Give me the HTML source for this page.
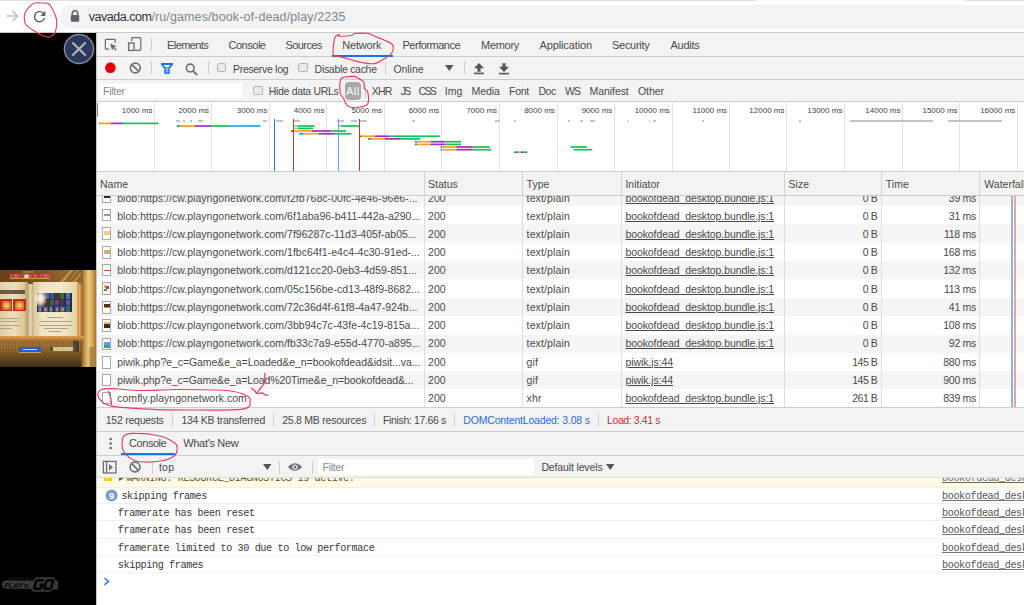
<!DOCTYPE html>
<html><head><meta charset="utf-8"><style>
html,body{margin:0;padding:0;}
body{width:1024px;height:605px;overflow:hidden;position:relative;background:#fff;font-family:"Liberation Sans",sans-serif;}
.t{position:absolute;white-space:nowrap;}
svg{overflow:visible}
</style></head><body>
<div style="position:absolute;left:0.00px;top:0.00px;width:1024.00px;height:33.00px;background:#fff"></div>
<div style="position:absolute;left:0.00px;top:0.00px;width:757.00px;height:1.00px;background:#dee1e6"></div>
<div style="position:absolute;left:964.00px;top:0.00px;width:60.00px;height:1.00px;background:#dee1e6"></div>
<div style="position:absolute;left:60.00px;top:4.50px;width:980.00px;height:24.50px;background:#f1f3f4;border-radius:12px"></div>
<div style="position:absolute;left:0.00px;top:32.00px;width:1024.00px;height:1.00px;background:#c9c9c9"></div>
<svg style="position:absolute;left:4px;top:8px;" width="16" height="16" viewBox="0 0 16 16"><path d="M2.5 8 H13.5 M8.5 3 L13.5 8 L8.5 13" fill="none" stroke="#bdc1c6" stroke-width="1.6"/></svg>
<svg style="position:absolute;left:31.15px;top:7.85px;" width="17.3" height="17.3" viewBox="0 0 17.3 17.3"><g transform="scale(0.7208)"><path d="M17.65 6.35A7.958 7.958 0 0 0 12 4c-4.42 0-7.99 3.58-7.99 8s3.57 8 7.99 8c3.73 0 6.84-2.55 7.73-6h-2.08A5.990 5.990 0 0 1 12 18c-3.31 0-6-2.690-6-6s2.690-6 6-6c1.66 0 3.14.69 4.220 1.78L13 11h7V4l-2.35 2.35z" fill="#5f6368"/></g></svg>
<svg style="position:absolute;left:69px;top:9px;" width="12" height="14" viewBox="0 0 12 14"><path d="M3.2 6 V4.6 A2.8 2.8 0 0 1 8.8 4.6 V6" fill="none" stroke="#5f6368" stroke-width="1.4"/><rect x="1.8" y="6" width="8.4" height="6.8" rx="0.8" fill="#5f6368"/></svg>
<div class="t" style="left:88.7px;top:10.72px;font-size:12.5px;line-height:12.5px;color:#303134"><span style="letter-spacing:-0.469px">vavada.com</span><span style="color:#80868b;letter-spacing:0.116px">/ru/games/book-of-dead/play/2235</span></div>
<div style="position:absolute;left:0.00px;top:33.00px;width:96.00px;height:572.00px;background:#000"></div>
<div style="position:absolute;left:96.00px;top:33.00px;width:928.00px;height:572.00px;background:#fff"></div>
<div style="position:absolute;left:96.00px;top:33.00px;width:1.00px;height:572.00px;background:#c8c8c8"></div>
<div style="position:absolute;left:97.00px;top:33.00px;width:927.00px;height:23.00px;background:#f3f3f3"></div>
<div style="position:absolute;left:97.00px;top:56.00px;width:927.00px;height:1.00px;background:#cdcdcd"></div>
<svg style="position:absolute;left:104px;top:38px;" width="14" height="14" viewBox="0 0 14 14"><path d="M5.2 11.2 H2.2 Q1.4 11.2 1.4 10.4 V2.2 Q1.4 1.4 2.2 1.4 H10.4 Q11.2 1.4 11.2 2.2 V5" fill="none" stroke="#6e6e6e" stroke-width="1.2"/><path d="M6 5.6 L12.6 8.2 L10.2 9.2 L12.8 11.8 L11.8 12.8 L9.2 10.2 L8.2 12.6 Z" fill="#6e6e6e"/></svg>
<svg style="position:absolute;left:127px;top:36px;" width="16" height="16" viewBox="0 0 16 16"><path d="M4.6 5 V2.4 Q4.6 1.6 5.4 1.6 H13 Q13.8 1.6 13.8 2.4 V13.6 Q13.8 14.4 13 14.4 H7.6" fill="none" stroke="#6e6e6e" stroke-width="1.2"/><rect x="1.6" y="7" width="5.4" height="7.4" fill="none" stroke="#6e6e6e" stroke-width="1.4"/></svg>
<div style="position:absolute;left:151.00px;top:38.00px;width:1.00px;height:13.00px;background:#cfcfcf"></div>
<div class="t" style="left:167.10px;top:39.59px;font-size:11px;line-height:11px;color:#4a4a4a;letter-spacing:-0.606px;font-family:"Liberation Sans", sans-serif;">Elements</div>
<div class="t" style="left:228.50px;top:39.59px;font-size:11px;line-height:11px;color:#4a4a4a;letter-spacing:-0.479px;font-family:"Liberation Sans", sans-serif;">Console</div>
<div class="t" style="left:285.60px;top:39.59px;font-size:11px;line-height:11px;color:#4a4a4a;letter-spacing:-0.607px;font-family:"Liberation Sans", sans-serif;">Sources</div>
<div class="t" style="left:342.20px;top:39.59px;font-size:11px;line-height:11px;color:#4a4a4a;letter-spacing:-0.177px;font-family:"Liberation Sans", sans-serif;">Network</div>
<div class="t" style="left:402.50px;top:39.59px;font-size:11px;line-height:11px;color:#4a4a4a;letter-spacing:-0.497px;font-family:"Liberation Sans", sans-serif;">Performance</div>
<div class="t" style="left:481.00px;top:39.59px;font-size:11px;line-height:11px;color:#4a4a4a;letter-spacing:-0.287px;font-family:"Liberation Sans", sans-serif;">Memory</div>
<div class="t" style="left:539.50px;top:39.59px;font-size:11px;line-height:11px;color:#4a4a4a;letter-spacing:-0.119px;font-family:"Liberation Sans", sans-serif;">Application</div>
<div class="t" style="left:612.00px;top:39.59px;font-size:11px;line-height:11px;color:#4a4a4a;letter-spacing:-0.279px;font-family:"Liberation Sans", sans-serif;">Security</div>
<div class="t" style="left:670.50px;top:39.59px;font-size:11px;line-height:11px;color:#4a4a4a;letter-spacing:-0.262px;font-family:"Liberation Sans", sans-serif;">Audits</div>
<div style="position:absolute;left:332.00px;top:54.50px;width:60.50px;height:2.00px;background:#1a73e8"></div>
<div style="position:absolute;left:97.00px;top:57.00px;width:927.00px;height:22.00px;background:#f3f3f3"></div>
<div style="position:absolute;left:97.00px;top:79.00px;width:927.00px;height:1.00px;background:#cdcdcd"></div>
<svg style="position:absolute;left:103px;top:61px;" width="15" height="15" viewBox="0 0 15 15"><circle cx="7.4" cy="6.8" r="6" fill="#ff6b6b" opacity="0.35"/><circle cx="7.4" cy="6.8" r="5.2" fill="#e00000"/></svg>
<svg style="position:absolute;left:128px;top:61px;" width="15" height="15" viewBox="0 0 15 15"><circle cx="7.3" cy="7" r="4.9" fill="none" stroke="#6e6e6e" stroke-width="1.6"/><path d="M3.9 3.6 L10.7 10.4" stroke="#6e6e6e" stroke-width="1.6"/></svg>
<div style="position:absolute;left:150.50px;top:61.00px;width:1.00px;height:13.00px;background:#cfcfcf"></div>
<svg style="position:absolute;left:160px;top:62px;" width="14" height="13" viewBox="0 0 14 13"><path d="M1 1 H13 V2.8 L9.8 6.6 V10.4 Q9.8 11.9 8.3 11.9 H5.7 Q4.2 11.9 4.2 10.4 V6.6 L1 2.8 Z" fill="#1a73e8"/><path d="M3.4 2.9 H10.6 L8.5 5.3 H5.5 Z" fill="#f3f3f3"/><path d="M5.6 5.6 H8.4 V9.9 Q8.4 10.5 7.8 10.5 H6.2 Q5.6 10.5 5.6 9.9 Z" fill="#8dbaf6"/></svg>
<svg style="position:absolute;left:184.5px;top:62.5px;" width="14" height="13" viewBox="0 0 14 13"><circle cx="5.2" cy="5" r="3.9" fill="none" stroke="#6e6e6e" stroke-width="1.6"/><path d="M8 7.8 L12.2 12" stroke="#6e6e6e" stroke-width="1.9"/></svg>
<div style="position:absolute;left:207.50px;top:61.00px;width:1.00px;height:13.00px;background:#cfcfcf"></div>
<div style="position:absolute;left:217.00px;top:63.00px;width:9.00px;height:9.30px;background:#eaeaea;border:1px solid #b5b5b5;border-radius:2px;box-sizing:border-box"></div>
<div class="t" style="left:233.00px;top:63.71px;font-size:10.5px;line-height:10.5px;color:#4a4a4a;letter-spacing:-0.312px;font-family:"Liberation Sans", sans-serif;">Preserve log</div>
<div style="position:absolute;left:298.30px;top:63.00px;width:9.30px;height:9.30px;background:#eaeaea;border:1px solid #b5b5b5;border-radius:2px;box-sizing:border-box"></div>
<div class="t" style="left:314.60px;top:63.71px;font-size:10.5px;line-height:10.5px;color:#4a4a4a;letter-spacing:-0.296px;font-family:"Liberation Sans", sans-serif;">Disable cache</div>
<div style="position:absolute;left:384.50px;top:61.00px;width:1.00px;height:13.00px;background:#cfcfcf"></div>
<div class="t" style="left:393.40px;top:63.71px;font-size:10.5px;line-height:10.5px;color:#4a4a4a;letter-spacing:-0.042px;font-family:"Liberation Sans", sans-serif;">Online</div>
<svg style="position:absolute;left:444px;top:64px;" width="11" height="8" viewBox="0 0 11 8"><path d="M1 1 H9.5 L5.25 7 Z" fill="#555"/></svg>
<div style="position:absolute;left:463.50px;top:61.00px;width:1.00px;height:13.00px;background:#cfcfcf"></div>
<svg style="position:absolute;left:472px;top:61px;" width="14" height="14" viewBox="0 0 14 14"><path d="M7 2 L12 7.2 H8.6 V10.8 H5.4 V7.2 H2 Z" fill="#555"/><rect x="2" y="11.6" width="10" height="1.6" fill="#555"/></svg>
<svg style="position:absolute;left:496.5px;top:61px;" width="14" height="14" viewBox="0 0 14 14"><path d="M7 11 L12 5.8 H8.6 V2.2 H5.4 V5.8 H2 Z" fill="#555"/><rect x="2" y="11.8" width="10" height="1.6" fill="#555"/></svg>
<div style="position:absolute;left:97.00px;top:80.00px;width:927.00px;height:21.00px;background:#f3f3f3"></div>
<div style="position:absolute;left:97.00px;top:101.00px;width:927.00px;height:1.00px;background:#cdcdcd"></div>
<div style="position:absolute;left:100.00px;top:82.70px;width:142.00px;height:15.50px;background:#fff"></div>
<div class="t" style="left:103.00px;top:86.31px;font-size:10.5px;line-height:10.5px;color:#8a8a8a;letter-spacing:-0.272px;font-family:"Liberation Sans", sans-serif;">Filter</div>
<div style="position:absolute;left:253.20px;top:86.00px;width:9.40px;height:9.40px;background:#eaeaea;border:1px solid #b5b5b5;border-radius:2px;box-sizing:border-box"></div>
<div class="t" style="left:268.70px;top:86.11px;font-size:10.5px;line-height:10.5px;color:#4a4a4a;letter-spacing:-0.308px;font-family:"Liberation Sans", sans-serif;">Hide data URLs</div>
<div style="position:absolute;left:345.00px;top:82.20px;width:16.00px;height:18.00px;background:#a9a9a9;border-radius:4px"></div>
<div class="t" style="left:346.20px;top:86.11px;font-size:10.5px;line-height:10.5px;color:#fff;letter-spacing:0.610px;font-family:"Liberation Sans", sans-serif;">All</div>
<div style="position:absolute;left:364.50px;top:85.00px;width:1.00px;height:13.00px;background:#cfcfcf"></div>
<div class="t" style="left:371.80px;top:86.11px;font-size:10.5px;line-height:10.5px;color:#4a4a4a;letter-spacing:-0.823px;font-family:"Liberation Sans", sans-serif;">XHR</div>
<div class="t" style="left:400.80px;top:86.11px;font-size:10.5px;line-height:10.5px;color:#4a4a4a;letter-spacing:-1.827px;font-family:"Liberation Sans", sans-serif;">JS</div>
<div class="t" style="left:418.60px;top:86.11px;font-size:10.5px;line-height:10.5px;color:#4a4a4a;letter-spacing:-1.664px;font-family:"Liberation Sans", sans-serif;">CSS</div>
<div class="t" style="left:444.70px;top:86.11px;font-size:10.5px;line-height:10.5px;color:#4a4a4a;letter-spacing:0.033px;font-family:"Liberation Sans", sans-serif;">Img</div>
<div class="t" style="left:471.60px;top:86.11px;font-size:10.5px;line-height:10.5px;color:#4a4a4a;letter-spacing:-0.079px;font-family:"Liberation Sans", sans-serif;">Media</div>
<div class="t" style="left:509.10px;top:86.11px;font-size:10.5px;line-height:10.5px;color:#4a4a4a;letter-spacing:-0.277px;font-family:"Liberation Sans", sans-serif;">Font</div>
<div class="t" style="left:538.40px;top:86.11px;font-size:10.5px;line-height:10.5px;color:#4a4a4a;letter-spacing:-0.357px;font-family:"Liberation Sans", sans-serif;">Doc</div>
<div class="t" style="left:564.90px;top:86.11px;font-size:10.5px;line-height:10.5px;color:#4a4a4a;letter-spacing:-0.857px;font-family:"Liberation Sans", sans-serif;">WS</div>
<div class="t" style="left:589.50px;top:86.11px;font-size:10.5px;line-height:10.5px;color:#4a4a4a;letter-spacing:-0.060px;font-family:"Liberation Sans", sans-serif;">Manifest</div>
<div class="t" style="left:638.00px;top:86.11px;font-size:10.5px;line-height:10.5px;color:#4a4a4a;letter-spacing:-0.092px;font-family:"Liberation Sans", sans-serif;">Other</div>
<div style="position:absolute;left:154.25px;top:102.00px;width:1.00px;height:69.00px;background:#e3e3e3"></div>
<div class="t" style="right:871.55px;top:107.43px;font-size:8px;line-height:8px;color:#444;font-family:"Liberation Sans", sans-serif;">1000 ms</div>
<div style="position:absolute;left:210.90px;top:102.00px;width:1.00px;height:69.00px;background:#e3e3e3"></div>
<div class="t" style="right:814.90px;top:107.43px;font-size:8px;line-height:8px;color:#444;font-family:"Liberation Sans", sans-serif;">2000 ms</div>
<div style="position:absolute;left:269.30px;top:102.00px;width:1.00px;height:69.00px;background:#e3e3e3"></div>
<div class="t" style="right:756.50px;top:107.43px;font-size:8px;line-height:8px;color:#444;font-family:"Liberation Sans", sans-serif;">3000 ms</div>
<div style="position:absolute;left:326.20px;top:102.00px;width:1.00px;height:69.00px;background:#e3e3e3"></div>
<div class="t" style="right:699.60px;top:107.43px;font-size:8px;line-height:8px;color:#444;font-family:"Liberation Sans", sans-serif;">4000 ms</div>
<div style="position:absolute;left:383.90px;top:102.00px;width:1.00px;height:69.00px;background:#e3e3e3"></div>
<div class="t" style="right:641.90px;top:107.43px;font-size:8px;line-height:8px;color:#444;font-family:"Liberation Sans", sans-serif;">5000 ms</div>
<div style="position:absolute;left:441.10px;top:102.00px;width:1.00px;height:69.00px;background:#e3e3e3"></div>
<div class="t" style="right:584.70px;top:107.43px;font-size:8px;line-height:8px;color:#444;font-family:"Liberation Sans", sans-serif;">6000 ms</div>
<div style="position:absolute;left:498.90px;top:102.00px;width:1.00px;height:69.00px;background:#e3e3e3"></div>
<div class="t" style="right:526.90px;top:107.43px;font-size:8px;line-height:8px;color:#444;font-family:"Liberation Sans", sans-serif;">7000 ms</div>
<div style="position:absolute;left:556.60px;top:102.00px;width:1.00px;height:69.00px;background:#e3e3e3"></div>
<div class="t" style="right:469.20px;top:107.43px;font-size:8px;line-height:8px;color:#444;font-family:"Liberation Sans", sans-serif;">8000 ms</div>
<div style="position:absolute;left:614.10px;top:102.00px;width:1.00px;height:69.00px;background:#e3e3e3"></div>
<div class="t" style="right:411.70px;top:107.43px;font-size:8px;line-height:8px;color:#444;font-family:"Liberation Sans", sans-serif;">9000 ms</div>
<div style="position:absolute;left:671.60px;top:102.00px;width:1.00px;height:69.00px;background:#e3e3e3"></div>
<div class="t" style="right:354.20px;top:107.43px;font-size:8px;line-height:8px;color:#444;font-family:"Liberation Sans", sans-serif;">10000 ms</div>
<div style="position:absolute;left:728.90px;top:102.00px;width:1.00px;height:69.00px;background:#e3e3e3"></div>
<div class="t" style="right:296.90px;top:107.43px;font-size:8px;line-height:8px;color:#444;font-family:"Liberation Sans", sans-serif;">11000 ms</div>
<div style="position:absolute;left:786.30px;top:102.00px;width:1.00px;height:69.00px;background:#e3e3e3"></div>
<div class="t" style="right:239.50px;top:107.43px;font-size:8px;line-height:8px;color:#444;font-family:"Liberation Sans", sans-serif;">12000 ms</div>
<div style="position:absolute;left:844.20px;top:102.00px;width:1.00px;height:69.00px;background:#e3e3e3"></div>
<div class="t" style="right:181.60px;top:107.43px;font-size:8px;line-height:8px;color:#444;font-family:"Liberation Sans", sans-serif;">13000 ms</div>
<div style="position:absolute;left:902.30px;top:102.00px;width:1.00px;height:69.00px;background:#e3e3e3"></div>
<div class="t" style="right:123.50px;top:107.43px;font-size:8px;line-height:8px;color:#444;font-family:"Liberation Sans", sans-serif;">14000 ms</div>
<div style="position:absolute;left:959.40px;top:102.00px;width:1.00px;height:69.00px;background:#e3e3e3"></div>
<div class="t" style="right:66.40px;top:107.43px;font-size:8px;line-height:8px;color:#444;font-family:"Liberation Sans", sans-serif;">15000 ms</div>
<div style="position:absolute;left:1017.10px;top:102.00px;width:1.00px;height:69.00px;background:#e3e3e3"></div>
<div class="t" style="right:8.70px;top:107.43px;font-size:8px;line-height:8px;color:#444;font-family:"Liberation Sans", sans-serif;">16000 ms</div>
<div style="position:absolute;left:97.00px;top:102.50px;width:1.20px;height:14.00px;background:#8a8a8a"></div>
<div style="position:absolute;left:176.30px;top:120.40px;width:3.70px;height:1.20px;background:#c4c4c4"></div>
<div style="position:absolute;left:182.50px;top:120.40px;width:2.50px;height:1.20px;background:#c4c4c4"></div>
<div style="position:absolute;left:190.00px;top:120.40px;width:2.00px;height:1.20px;background:#c4c4c4"></div>
<div style="position:absolute;left:198.00px;top:120.40px;width:5.00px;height:1.20px;background:#c4c4c4"></div>
<div style="position:absolute;left:262.70px;top:120.40px;width:4.30px;height:1.20px;background:#c4c4c4"></div>
<div style="position:absolute;left:275.60px;top:120.40px;width:7.80px;height:1.20px;background:#c4c4c4"></div>
<div style="position:absolute;left:293.60px;top:120.40px;width:6.20px;height:1.20px;background:#c4c4c4"></div>
<div style="position:absolute;left:336.60px;top:120.40px;width:7.80px;height:1.20px;background:#c4c4c4"></div>
<div style="position:absolute;left:351.40px;top:120.40px;width:5.50px;height:1.20px;background:#c4c4c4"></div>
<div style="position:absolute;left:360.00px;top:120.40px;width:7.00px;height:1.20px;background:#c4c4c4"></div>
<div style="position:absolute;left:412.00px;top:120.40px;width:2.70px;height:1.20px;background:#c4c4c4"></div>
<div style="position:absolute;left:495.00px;top:120.40px;width:5.00px;height:1.20px;background:#c4c4c4"></div>
<div style="position:absolute;left:514.00px;top:120.40px;width:1.60px;height:1.20px;background:#c4c4c4"></div>
<div style="position:absolute;left:568.00px;top:120.40px;width:1.70px;height:1.20px;background:#c4c4c4"></div>
<div style="position:absolute;left:579.80px;top:120.40px;width:3.20px;height:1.20px;background:#c4c4c4"></div>
<div style="position:absolute;left:590.00px;top:120.40px;width:4.70px;height:1.20px;background:#c4c4c4"></div>
<div style="position:absolute;left:627.50px;top:120.40px;width:1.50px;height:1.20px;background:#c4c4c4"></div>
<div style="position:absolute;left:648.60px;top:120.40px;width:1.40px;height:1.20px;background:#c4c4c4"></div>
<div style="position:absolute;left:653.30px;top:120.40px;width:2.30px;height:1.20px;background:#c4c4c4"></div>
<div style="position:absolute;left:850.30px;top:120.40px;width:83.10px;height:1.20px;background:#c4c4c4"></div>
<div style="position:absolute;left:947.70px;top:120.40px;width:54.00px;height:1.20px;background:#c4c4c4"></div>
<div style="position:absolute;left:702.00px;top:120.40px;width:1.50px;height:1.20px;background:#c4c4c4"></div>
<div style="position:absolute;left:799.00px;top:120.40px;width:2.00px;height:1.20px;background:#c4c4c4"></div>
<svg style="position:absolute;left:0;top:0" width="1024" height="180" viewBox="0 0 1024 180"><rect x="98.90" y="122.55" width="1.50" height="1.7" fill="#159e96"/><rect x="100.40" y="122.55" width="10.60" height="1.7" fill="#ff9e1b"/><rect x="111.00" y="122.55" width="12.00" height="1.7" fill="#9b30c4"/><rect x="123.00" y="122.55" width="35.60" height="1.7" fill="#15c05a"/><rect x="176.80" y="125.15" width="3.20" height="1.7" fill="#159e96"/><rect x="180.00" y="125.15" width="15.00" height="1.7" fill="#ff9e1b"/><rect x="195.00" y="125.15" width="16.00" height="1.7" fill="#9b30c4"/><rect x="211.00" y="125.15" width="17.00" height="1.7" fill="#15c05a"/><rect x="228.00" y="125.15" width="32.60" height="1.7" fill="#2aa6ee"/><rect x="294.40" y="125.15" width="3.10" height="1.7" fill="#b9b9b9"/><rect x="297.50" y="125.15" width="17.20" height="1.7" fill="#15c05a"/><rect x="294.40" y="127.55" width="3.10" height="1.7" fill="#b9b9b9"/><rect x="297.50" y="127.55" width="15.50" height="1.7" fill="#15c05a"/><rect x="291.00" y="130.15" width="2.60" height="1.7" fill="#555"/><rect x="293.60" y="130.15" width="18.00" height="1.7" fill="#ff9e1b"/><rect x="311.60" y="130.15" width="19.40" height="1.7" fill="#9b30c4"/><rect x="331.00" y="130.15" width="15.00" height="1.7" fill="#15c05a"/><rect x="299.00" y="132.90" width="4.75" height="1.7" fill="#159e96"/><rect x="303.75" y="132.90" width="14.85" height="1.7" fill="#ff9e1b"/><rect x="318.60" y="132.90" width="16.40" height="1.7" fill="#9b30c4"/><rect x="335.00" y="132.90" width="16.40" height="1.7" fill="#15c05a"/><rect x="339.00" y="125.15" width="2.00" height="1.7" fill="#b9b9b9"/><rect x="341.00" y="125.15" width="18.00" height="1.7" fill="#15c05a"/><rect x="359.80" y="135.40" width="1.70" height="1.7" fill="#555"/><rect x="361.50" y="135.40" width="13.30" height="1.7" fill="#ff9e1b"/><rect x="374.80" y="135.40" width="14.90" height="1.7" fill="#9b30c4"/><rect x="389.70" y="135.40" width="50.10" height="1.7" fill="#15c05a"/><rect x="367.80" y="138.05" width="3.20" height="1.7" fill="#159e96"/><rect x="371.00" y="138.05" width="14.00" height="1.7" fill="#ff9e1b"/><rect x="385.00" y="138.05" width="15.60" height="1.7" fill="#9b30c4"/><rect x="400.60" y="138.05" width="19.70" height="1.7" fill="#15c05a"/><rect x="414.80" y="140.85" width="2.40" height="1.7" fill="#159e96"/><rect x="417.20" y="140.85" width="13.30" height="1.7" fill="#ff9e1b"/><rect x="430.50" y="140.85" width="14.80" height="1.7" fill="#9b30c4"/><rect x="445.30" y="140.85" width="15.70" height="1.7" fill="#15c05a"/><rect x="414.80" y="143.55" width="2.40" height="1.7" fill="#159e96"/><rect x="417.20" y="143.55" width="13.30" height="1.7" fill="#ff9e1b"/><rect x="430.50" y="143.55" width="14.80" height="1.7" fill="#9b30c4"/><rect x="445.30" y="143.55" width="15.70" height="1.7" fill="#15c05a"/><rect x="440.60" y="146.15" width="1.60" height="1.7" fill="#159e96"/><rect x="442.20" y="146.15" width="14.05" height="1.7" fill="#ff9e1b"/><rect x="456.25" y="146.15" width="16.45" height="1.7" fill="#9b30c4"/><rect x="472.70" y="146.15" width="17.10" height="1.7" fill="#15c05a"/><rect x="440.60" y="148.85" width="1.60" height="1.7" fill="#159e96"/><rect x="442.20" y="148.85" width="14.05" height="1.7" fill="#ff9e1b"/><rect x="456.25" y="148.85" width="16.45" height="1.7" fill="#9b30c4"/><rect x="472.70" y="148.85" width="18.70" height="1.7" fill="#15c05a"/><rect x="514.00" y="151.35" width="4.75" height="1.7" fill="#159e96"/><rect x="518.75" y="151.35" width="2.25" height="1.7" fill="#ff9e1b"/><rect x="521.00" y="151.35" width="2.40" height="1.7" fill="#9b30c4"/><rect x="523.40" y="151.35" width="3.90" height="1.7" fill="#159e96"/><rect x="570.50" y="146.15" width="16.40" height="1.7" fill="#15c05a"/><rect x="573.60" y="148.85" width="18.70" height="1.7" fill="#15c05a"/></svg>
<div style="position:absolute;left:274.00px;top:119.00px;width:1.20px;height:52.00px;background:#2f6fd6"></div>
<div style="position:absolute;left:293.00px;top:119.00px;width:1.20px;height:52.00px;background:#cc3333"></div>
<div style="position:absolute;left:338.00px;top:119.00px;width:1.20px;height:52.00px;background:#6a9de6"></div>
<div style="position:absolute;left:359.00px;top:119.00px;width:1.20px;height:52.00px;background:#cc3333"></div>
<div style="position:absolute;left:97.00px;top:171.00px;width:927.00px;height:1.00px;background:#cdcdcd"></div>
<div style="position:absolute;left:97.00px;top:172.00px;width:927.00px;height:23.00px;background:#f3f3f3"></div>
<div style="position:absolute;left:97.00px;top:195.00px;width:927.00px;height:1.00px;background:#cdcdcd"></div>
<div style="position:absolute;left:423.60px;top:172.00px;width:1.00px;height:23.00px;background:#d4d4d4"></div>
<div style="position:absolute;left:522.10px;top:172.00px;width:1.00px;height:23.00px;background:#d4d4d4"></div>
<div style="position:absolute;left:621.00px;top:172.00px;width:1.00px;height:23.00px;background:#d4d4d4"></div>
<div style="position:absolute;left:784.10px;top:172.00px;width:1.00px;height:23.00px;background:#d4d4d4"></div>
<div style="position:absolute;left:880.90px;top:172.00px;width:1.00px;height:23.00px;background:#d4d4d4"></div>
<div style="position:absolute;left:979.30px;top:172.00px;width:1.00px;height:23.00px;background:#d4d4d4"></div>
<div class="t" style="left:100.00px;top:179.21px;font-size:10.5px;line-height:10.5px;color:#4a4a4a;font-family:"Liberation Sans", sans-serif;">Name</div>
<div class="t" style="left:428.10px;top:179.21px;font-size:10.5px;line-height:10.5px;color:#4a4a4a;font-family:"Liberation Sans", sans-serif;">Status</div>
<div class="t" style="left:526.60px;top:179.21px;font-size:10.5px;line-height:10.5px;color:#4a4a4a;font-family:"Liberation Sans", sans-serif;">Type</div>
<div class="t" style="left:625.40px;top:179.21px;font-size:10.5px;line-height:10.5px;color:#4a4a4a;font-family:"Liberation Sans", sans-serif;">Initiator</div>
<div class="t" style="left:788.60px;top:179.21px;font-size:10.5px;line-height:10.5px;color:#4a4a4a;font-family:"Liberation Sans", sans-serif;">Size</div>
<div class="t" style="left:885.80px;top:179.21px;font-size:10.5px;line-height:10.5px;color:#4a4a4a;font-family:"Liberation Sans", sans-serif;">Time</div>
<div class="t" style="left:984.30px;top:179.21px;font-size:10.5px;line-height:10.5px;color:#4a4a4a;font-family:"Liberation Sans", sans-serif;">Waterfall</div>
<div style="position:absolute;left:97px;top:196px;width:927px;height:211px;overflow:hidden">
<div style="position:absolute;left:0;top:-8.60px;width:927px;height:18.35px;background:#f5f5f5"></div>
<div style="position:absolute;left:0;top:9.75px;width:927px;height:18.45px;background:#fff"></div>
<div style="position:absolute;left:0;top:28.20px;width:927px;height:18.80px;background:#f5f5f5"></div>
<div style="position:absolute;left:0;top:47.00px;width:927px;height:17.80px;background:#fff"></div>
<div style="position:absolute;left:0;top:64.80px;width:927px;height:18.60px;background:#f5f5f5"></div>
<div style="position:absolute;left:0;top:83.40px;width:927px;height:18.70px;background:#fff"></div>
<div style="position:absolute;left:0;top:102.10px;width:927px;height:18.30px;background:#f5f5f5"></div>
<div style="position:absolute;left:0;top:120.40px;width:927px;height:18.20px;background:#fff"></div>
<div style="position:absolute;left:0;top:138.60px;width:927px;height:18.40px;background:#f5f5f5"></div>
<div style="position:absolute;left:0;top:157.00px;width:927px;height:17.80px;background:#fff"></div>
<div style="position:absolute;left:0;top:174.80px;width:927px;height:18.10px;background:#f5f5f5"></div>
<div style="position:absolute;left:0;top:192.90px;width:927px;height:17.90px;background:#fff"></div>
<div style="position:absolute;left:326.60px;top:0;width:1px;height:300px;background:#dedede"></div>
<div style="position:absolute;left:425.10px;top:0;width:1px;height:300px;background:#dedede"></div>
<div style="position:absolute;left:524.00px;top:0;width:1px;height:300px;background:#dedede"></div>
<div style="position:absolute;left:687.10px;top:0;width:1px;height:300px;background:#dedede"></div>
<div style="position:absolute;left:783.90px;top:0;width:1px;height:300px;background:#dedede"></div>
<div style="position:absolute;left:882.30px;top:0;width:1px;height:300px;background:#dedede"></div>
<div class="t" style="left:20.20px;top:-3.48px;font-size:10.5px;line-height:10.5px;color:#4a4a4a;letter-spacing:0.034px;">blob:https://cw.playngonetwork.com/f2fb768c-00fc-4e46-96e6-...</div>
<div class="t" style="left:331.10px;top:-3.48px;font-size:10.5px;line-height:10.5px;color:#4a4a4a;">200</div>
<div class="t" style="left:429.60px;top:-3.48px;font-size:10.5px;line-height:10.5px;color:#4a4a4a;letter-spacing:0.128px;">text/plain</div>
<div class="t" style="left:528.40px;top:-3.48px;font-size:10.5px;line-height:10.5px;color:#4a4a4a;letter-spacing:-0.086px;text-decoration:underline">bookofdead_desktop.bundle.js:1</div>
<div class="t" style="left:auto;right:146.80px;top:-3.48px;font-size:10.5px;line-height:10.5px;color:#4a4a4a;letter-spacing:-0.473px;">0 B</div>
<div class="t" style="left:auto;right:48.00px;top:-3.48px;font-size:10.5px;line-height:10.5px;color:#4a4a4a;letter-spacing:-0.286px;">39 ms</div>
<div style="position:absolute;left:5.40px;top:-5.60px;width:9px;height:12.5px;background:#fff;border:1px solid #a8a8a8;box-sizing:border-box"></div>
<div style="position:absolute;left:6.90px;top:-0.10px;width:6px;height:2.5px;background:#2a2a2a"></div>
<div class="t" style="left:20.20px;top:14.76px;font-size:10.5px;line-height:10.5px;color:#4a4a4a;letter-spacing:0.035px;">blob:https://cw.playngonetwork.com/6f1aba96-b411-442a-a290...</div>
<div class="t" style="left:331.10px;top:14.76px;font-size:10.5px;line-height:10.5px;color:#4a4a4a;">200</div>
<div class="t" style="left:429.60px;top:14.76px;font-size:10.5px;line-height:10.5px;color:#4a4a4a;letter-spacing:0.128px;">text/plain</div>
<div class="t" style="left:528.40px;top:14.76px;font-size:10.5px;line-height:10.5px;color:#4a4a4a;letter-spacing:-0.086px;text-decoration:underline">bookofdead_desktop.bundle.js:1</div>
<div class="t" style="left:auto;right:146.80px;top:14.76px;font-size:10.5px;line-height:10.5px;color:#4a4a4a;letter-spacing:-0.473px;">0 B</div>
<div class="t" style="left:auto;right:48.00px;top:14.76px;font-size:10.5px;line-height:10.5px;color:#4a4a4a;letter-spacing:-0.286px;">31 ms</div>
<div style="position:absolute;left:5.40px;top:12.75px;width:9px;height:12.5px;background:#fff;border:1px solid #a8a8a8;box-sizing:border-box"></div>
<div style="position:absolute;left:6.90px;top:18.25px;width:6px;height:1.5px;background:#b0947a"></div>
<div class="t" style="left:20.20px;top:33.00px;font-size:10.5px;line-height:10.5px;color:#4a4a4a;letter-spacing:0.034px;">blob:https://cw.playngonetwork.com/7f96287c-11d3-405f-ab05...</div>
<div class="t" style="left:331.10px;top:33.00px;font-size:10.5px;line-height:10.5px;color:#4a4a4a;">200</div>
<div class="t" style="left:429.60px;top:33.00px;font-size:10.5px;line-height:10.5px;color:#4a4a4a;letter-spacing:0.128px;">text/plain</div>
<div class="t" style="left:528.40px;top:33.00px;font-size:10.5px;line-height:10.5px;color:#4a4a4a;letter-spacing:-0.086px;text-decoration:underline">bookofdead_desktop.bundle.js:1</div>
<div class="t" style="left:auto;right:146.80px;top:33.00px;font-size:10.5px;line-height:10.5px;color:#4a4a4a;letter-spacing:-0.473px;">0 B</div>
<div class="t" style="left:auto;right:48.00px;top:33.00px;font-size:10.5px;line-height:10.5px;color:#4a4a4a;letter-spacing:-0.280px;">118 ms</div>
<div style="position:absolute;left:5.40px;top:31.20px;width:9px;height:12.5px;background:#fff;border:1px solid #a8a8a8;box-sizing:border-box"></div>
<div style="position:absolute;left:6.90px;top:35.20px;width:6px;height:3.5px;background:#e8d080"></div>
<div class="t" style="left:20.20px;top:51.24px;font-size:10.5px;line-height:10.5px;color:#4a4a4a;letter-spacing:0.034px;">blob:https://cw.playngonetwork.com/1fbc64f1-e4c4-4c30-91ed-...</div>
<div class="t" style="left:331.10px;top:51.24px;font-size:10.5px;line-height:10.5px;color:#4a4a4a;">200</div>
<div class="t" style="left:429.60px;top:51.24px;font-size:10.5px;line-height:10.5px;color:#4a4a4a;letter-spacing:0.128px;">text/plain</div>
<div class="t" style="left:528.40px;top:51.24px;font-size:10.5px;line-height:10.5px;color:#4a4a4a;letter-spacing:-0.086px;text-decoration:underline">bookofdead_desktop.bundle.js:1</div>
<div class="t" style="left:auto;right:146.80px;top:51.24px;font-size:10.5px;line-height:10.5px;color:#4a4a4a;letter-spacing:-0.473px;">0 B</div>
<div class="t" style="left:auto;right:48.00px;top:51.24px;font-size:10.5px;line-height:10.5px;color:#4a4a4a;letter-spacing:-0.287px;">168 ms</div>
<div style="position:absolute;left:5.40px;top:50.00px;width:9px;height:12.5px;background:#fff;border:1px solid #a8a8a8;box-sizing:border-box"></div>
<div style="position:absolute;left:6.90px;top:54.00px;width:6px;height:3.5px;background:#c8b070"></div>
<div class="t" style="left:20.20px;top:69.48px;font-size:10.5px;line-height:10.5px;color:#4a4a4a;letter-spacing:0.035px;">blob:https://cw.playngonetwork.com/d121cc20-0eb3-4d59-851...</div>
<div class="t" style="left:331.10px;top:69.48px;font-size:10.5px;line-height:10.5px;color:#4a4a4a;">200</div>
<div class="t" style="left:429.60px;top:69.48px;font-size:10.5px;line-height:10.5px;color:#4a4a4a;letter-spacing:0.128px;">text/plain</div>
<div class="t" style="left:528.40px;top:69.48px;font-size:10.5px;line-height:10.5px;color:#4a4a4a;letter-spacing:-0.086px;text-decoration:underline">bookofdead_desktop.bundle.js:1</div>
<div class="t" style="left:auto;right:146.80px;top:69.48px;font-size:10.5px;line-height:10.5px;color:#4a4a4a;letter-spacing:-0.473px;">0 B</div>
<div class="t" style="left:auto;right:48.00px;top:69.48px;font-size:10.5px;line-height:10.5px;color:#4a4a4a;letter-spacing:-0.287px;">132 ms</div>
<div style="position:absolute;left:5.40px;top:67.80px;width:9px;height:12.5px;background:#fff;border:1px solid #a8a8a8;box-sizing:border-box"></div>
<div style="position:absolute;left:6.90px;top:73.80px;width:6px;height:1px;background:#b05030"></div>
<div class="t" style="left:20.20px;top:87.72px;font-size:10.5px;line-height:10.5px;color:#4a4a4a;letter-spacing:0.035px;">blob:https://cw.playngonetwork.com/05c156be-cd13-48f9-8682...</div>
<div class="t" style="left:331.10px;top:87.72px;font-size:10.5px;line-height:10.5px;color:#4a4a4a;">200</div>
<div class="t" style="left:429.60px;top:87.72px;font-size:10.5px;line-height:10.5px;color:#4a4a4a;letter-spacing:0.128px;">text/plain</div>
<div class="t" style="left:528.40px;top:87.72px;font-size:10.5px;line-height:10.5px;color:#4a4a4a;letter-spacing:-0.086px;text-decoration:underline">bookofdead_desktop.bundle.js:1</div>
<div class="t" style="left:auto;right:146.80px;top:87.72px;font-size:10.5px;line-height:10.5px;color:#4a4a4a;letter-spacing:-0.473px;">0 B</div>
<div class="t" style="left:auto;right:48.00px;top:87.72px;font-size:10.5px;line-height:10.5px;color:#4a4a4a;letter-spacing:-0.280px;">113 ms</div>
<div style="position:absolute;left:5.40px;top:86.40px;width:9px;height:12.5px;background:#fff;border:1px solid #a8a8a8;box-sizing:border-box"></div>
<div style="position:absolute;left:6.90px;top:89.40px;width:2.5px;height:3px;background:#e0b040"></div>
<div style="position:absolute;left:9.40px;top:90.40px;width:3px;height:3px;background:#c04030"></div>
<div style="position:absolute;left:7.40px;top:93.40px;width:3px;height:2px;background:#40a040"></div>
<div class="t" style="left:20.20px;top:105.96px;font-size:10.5px;line-height:10.5px;color:#4a4a4a;letter-spacing:0.034px;">blob:https://cw.playngonetwork.com/72c36d4f-61f8-4a47-924b...</div>
<div class="t" style="left:331.10px;top:105.96px;font-size:10.5px;line-height:10.5px;color:#4a4a4a;">200</div>
<div class="t" style="left:429.60px;top:105.96px;font-size:10.5px;line-height:10.5px;color:#4a4a4a;letter-spacing:0.128px;">text/plain</div>
<div class="t" style="left:528.40px;top:105.96px;font-size:10.5px;line-height:10.5px;color:#4a4a4a;letter-spacing:-0.086px;text-decoration:underline">bookofdead_desktop.bundle.js:1</div>
<div class="t" style="left:auto;right:146.80px;top:105.96px;font-size:10.5px;line-height:10.5px;color:#4a4a4a;letter-spacing:-0.473px;">0 B</div>
<div class="t" style="left:auto;right:48.00px;top:105.96px;font-size:10.5px;line-height:10.5px;color:#4a4a4a;letter-spacing:-0.286px;">41 ms</div>
<div style="position:absolute;left:5.40px;top:105.10px;width:9px;height:12.5px;background:#fff;border:1px solid #a8a8a8;box-sizing:border-box"></div>
<div style="position:absolute;left:6.90px;top:107.60px;width:6px;height:3px;background:#5a3018"></div>
<div style="position:absolute;left:6.90px;top:110.60px;width:6px;height:1px;background:#c09050"></div>
<div class="t" style="left:20.20px;top:124.20px;font-size:10.5px;line-height:10.5px;color:#4a4a4a;letter-spacing:0.035px;">blob:https://cw.playngonetwork.com/3bb94c7c-43fe-4c19-815a...</div>
<div class="t" style="left:331.10px;top:124.20px;font-size:10.5px;line-height:10.5px;color:#4a4a4a;">200</div>
<div class="t" style="left:429.60px;top:124.20px;font-size:10.5px;line-height:10.5px;color:#4a4a4a;letter-spacing:0.128px;">text/plain</div>
<div class="t" style="left:528.40px;top:124.20px;font-size:10.5px;line-height:10.5px;color:#4a4a4a;letter-spacing:-0.086px;text-decoration:underline">bookofdead_desktop.bundle.js:1</div>
<div class="t" style="left:auto;right:146.80px;top:124.20px;font-size:10.5px;line-height:10.5px;color:#4a4a4a;letter-spacing:-0.473px;">0 B</div>
<div class="t" style="left:auto;right:48.00px;top:124.20px;font-size:10.5px;line-height:10.5px;color:#4a4a4a;letter-spacing:-0.287px;">108 ms</div>
<div style="position:absolute;left:5.40px;top:123.40px;width:9px;height:12.5px;background:#fff;border:1px solid #a8a8a8;box-sizing:border-box"></div>
<div style="position:absolute;left:6.90px;top:126.40px;width:6px;height:2px;background:#e0c080"></div>
<div style="position:absolute;left:6.90px;top:128.40px;width:6px;height:3.5px;background:#4a2810"></div>
<div class="t" style="left:20.20px;top:142.44px;font-size:10.5px;line-height:10.5px;color:#4a4a4a;letter-spacing:0.035px;">blob:https://cw.playngonetwork.com/fb33c7a9-e55d-4770-a895...</div>
<div class="t" style="left:331.10px;top:142.44px;font-size:10.5px;line-height:10.5px;color:#4a4a4a;">200</div>
<div class="t" style="left:429.60px;top:142.44px;font-size:10.5px;line-height:10.5px;color:#4a4a4a;letter-spacing:0.128px;">text/plain</div>
<div class="t" style="left:528.40px;top:142.44px;font-size:10.5px;line-height:10.5px;color:#4a4a4a;letter-spacing:-0.086px;text-decoration:underline">bookofdead_desktop.bundle.js:1</div>
<div class="t" style="left:auto;right:146.80px;top:142.44px;font-size:10.5px;line-height:10.5px;color:#4a4a4a;letter-spacing:-0.473px;">0 B</div>
<div class="t" style="left:auto;right:48.00px;top:142.44px;font-size:10.5px;line-height:10.5px;color:#4a4a4a;letter-spacing:-0.286px;">92 ms</div>
<div style="position:absolute;left:5.40px;top:141.60px;width:9px;height:12.5px;background:#fff;border:1px solid #a8a8a8;box-sizing:border-box"></div>
<div style="position:absolute;left:6.90px;top:145.60px;width:6px;height:6px;background:#5aa0e0"></div>
<div style="position:absolute;left:6.90px;top:149.10px;width:6px;height:2.5px;background:#3cb040"></div>
<div class="t" style="left:20.20px;top:160.68px;font-size:10.5px;line-height:10.5px;color:#4a4a4a;letter-spacing:-0.063px;">piwik.php?e_c=Game&amp;e_a=Loaded&amp;e_n=bookofdead&amp;idsit...va...</div>
<div class="t" style="left:331.10px;top:160.68px;font-size:10.5px;line-height:10.5px;color:#4a4a4a;">200</div>
<div class="t" style="left:429.60px;top:160.68px;font-size:10.5px;line-height:10.5px;color:#4a4a4a;letter-spacing:0.112px;">gif</div>
<div class="t" style="left:528.40px;top:160.68px;font-size:10.5px;line-height:10.5px;color:#4a4a4a;letter-spacing:-0.075px;text-decoration:underline">piwik.js:44</div>
<div class="t" style="left:auto;right:146.80px;top:160.68px;font-size:10.5px;line-height:10.5px;color:#4a4a4a;letter-spacing:-0.494px;">145 B</div>
<div class="t" style="left:auto;right:48.00px;top:160.68px;font-size:10.5px;line-height:10.5px;color:#4a4a4a;letter-spacing:-0.287px;">880 ms</div>
<div style="position:absolute;left:5.40px;top:160.00px;width:9px;height:12.5px;background:#fff;border:1px solid #a8a8a8;box-sizing:border-box"></div>
<div class="t" style="left:20.20px;top:178.92px;font-size:10.5px;line-height:10.5px;color:#4a4a4a;letter-spacing:-0.080px;">piwik.php?e_c=Game&amp;e_a=Load%20Time&amp;e_n=bookofdead&amp;...</div>
<div class="t" style="left:331.10px;top:178.92px;font-size:10.5px;line-height:10.5px;color:#4a4a4a;">200</div>
<div class="t" style="left:429.60px;top:178.92px;font-size:10.5px;line-height:10.5px;color:#4a4a4a;letter-spacing:0.112px;">gif</div>
<div class="t" style="left:528.40px;top:178.92px;font-size:10.5px;line-height:10.5px;color:#4a4a4a;letter-spacing:-0.075px;text-decoration:underline">piwik.js:44</div>
<div class="t" style="left:auto;right:146.80px;top:178.92px;font-size:10.5px;line-height:10.5px;color:#4a4a4a;letter-spacing:-0.494px;">145 B</div>
<div class="t" style="left:auto;right:48.00px;top:178.92px;font-size:10.5px;line-height:10.5px;color:#4a4a4a;letter-spacing:-0.287px;">900 ms</div>
<div style="position:absolute;left:5.40px;top:177.80px;width:9px;height:12.5px;background:#fff;border:1px solid #a8a8a8;box-sizing:border-box"></div>
<div class="t" style="left:20.20px;top:197.16px;font-size:10.5px;line-height:10.5px;color:#4a4a4a;letter-spacing:0.036px;">comfly.playngonetwork.com</div>
<div class="t" style="left:331.10px;top:197.16px;font-size:10.5px;line-height:10.5px;color:#4a4a4a;">200</div>
<div class="t" style="left:429.60px;top:197.16px;font-size:10.5px;line-height:10.5px;color:#4a4a4a;letter-spacing:0.148px;">xhr</div>
<div class="t" style="left:528.40px;top:197.16px;font-size:10.5px;line-height:10.5px;color:#4a4a4a;letter-spacing:-0.086px;text-decoration:underline">bookofdead_desktop.bundle.js:1</div>
<div class="t" style="left:auto;right:146.80px;top:197.16px;font-size:10.5px;line-height:10.5px;color:#4a4a4a;letter-spacing:-0.494px;">261 B</div>
<div class="t" style="left:auto;right:48.00px;top:197.16px;font-size:10.5px;line-height:10.5px;color:#4a4a4a;letter-spacing:-0.287px;">839 ms</div>
<div style="position:absolute;left:5.40px;top:195.90px;width:9px;height:12.5px;background:#fff;border:1px solid #a8a8a8;box-sizing:border-box"></div>
<div style="position:absolute;left:914.00px;top:0;width:1.5px;height:300px;background:#8fb6f0"></div>
<div style="position:absolute;left:917.20px;top:0;width:1.5px;height:300px;background:#e9a3a3"></div>
</div>
<div style="position:absolute;left:97.00px;top:407.00px;width:927.00px;height:1.00px;background:#cdcdcd"></div>
<div style="position:absolute;left:97.00px;top:408.00px;width:927.00px;height:23.00px;background:#f3f3f3"></div>
<div style="position:absolute;left:97.00px;top:431.00px;width:927.00px;height:1.00px;background:#cdcdcd"></div>
<div style="position:absolute;left:172.20px;top:413.00px;width:1.00px;height:14.00px;background:#cfcfcf"></div>
<div style="position:absolute;left:273.30px;top:413.00px;width:1.00px;height:14.00px;background:#cfcfcf"></div>
<div style="position:absolute;left:374.10px;top:413.00px;width:1.00px;height:14.00px;background:#cfcfcf"></div>
<div style="position:absolute;left:454.30px;top:413.00px;width:1.00px;height:14.00px;background:#cfcfcf"></div>
<div style="position:absolute;left:597.50px;top:413.00px;width:1.00px;height:14.00px;background:#cfcfcf"></div>
<div class="t" style="left:105.70px;top:414.91px;font-size:10.5px;line-height:10.5px;color:#4a4a4a;letter-spacing:-0.234px;font-family:"Liberation Sans", sans-serif;">152 requests</div>
<div class="t" style="left:181.40px;top:414.91px;font-size:10.5px;line-height:10.5px;color:#4a4a4a;letter-spacing:-0.251px;font-family:"Liberation Sans", sans-serif;">134 KB transferred</div>
<div class="t" style="left:282.25px;top:414.91px;font-size:10.5px;line-height:10.5px;color:#4a4a4a;letter-spacing:-0.248px;font-family:"Liberation Sans", sans-serif;">25.8 MB resources</div>
<div class="t" style="left:383.00px;top:414.91px;font-size:10.5px;line-height:10.5px;color:#4a4a4a;letter-spacing:-0.352px;font-family:"Liberation Sans", sans-serif;">Finish: 17.66 s</div>
<div class="t" style="left:463.30px;top:414.91px;font-size:10.5px;line-height:10.5px;color:#2a6fd0;letter-spacing:-0.177px;font-family:"Liberation Sans", sans-serif;">DOMContentLoaded: 3.08 s</div>
<div class="t" style="left:607.00px;top:414.91px;font-size:10.5px;line-height:10.5px;color:#c8302e;letter-spacing:-0.399px;font-family:"Liberation Sans", sans-serif;">Load: 3.41 s</div>
<div style="position:absolute;left:97.00px;top:432.00px;width:927.00px;height:23.00px;background:#f3f3f3"></div>
<div style="position:absolute;left:97.00px;top:455.00px;width:927.00px;height:1.00px;background:#cdcdcd"></div>
<svg style="position:absolute;left:107px;top:437px;" width="8" height="13" viewBox="0 0 8 13"><circle cx="3.6" cy="2" r="1.3" fill="#666"/><circle cx="3.6" cy="6.5" r="1.3" fill="#666"/><circle cx="3.6" cy="11" r="1.3" fill="#666"/></svg>
<div class="t" style="left:129.10px;top:438.39px;font-size:11px;line-height:11px;color:#4a4a4a;letter-spacing:-0.458px;font-family:"Liberation Sans", sans-serif;">Console</div>
<div class="t" style="left:183.25px;top:438.39px;font-size:11px;line-height:11px;color:#4a4a4a;letter-spacing:-0.323px;font-family:"Liberation Sans", sans-serif;">What's New</div>
<div style="position:absolute;left:121.00px;top:453.30px;width:53.80px;height:2.00px;background:#1a73e8"></div>
<div style="position:absolute;left:97.00px;top:456.00px;width:927.00px;height:21.00px;background:#f3f3f3"></div>
<div style="position:absolute;left:97.00px;top:477.00px;width:927.00px;height:0.60px;background:#dcdcdc"></div>
<svg style="position:absolute;left:102px;top:460px;" width="16" height="15" viewBox="0 0 16 15"><rect x="1.4" y="1.4" width="12.6" height="11.6" fill="none" stroke="#6e6e6e" stroke-width="1.3"/><path d="M4.6 1.4 V13" stroke="#6e6e6e" stroke-width="1.3"/><path d="M7 4 L11 7.2 L7 10.4 Z" fill="#6e6e6e"/></svg>
<svg style="position:absolute;left:128px;top:460px;" width="15" height="15" viewBox="0 0 15 15"><circle cx="7" cy="7" r="4.9" fill="none" stroke="#6e6e6e" stroke-width="1.6"/><path d="M3.6 3.6 L10.4 10.4" stroke="#6e6e6e" stroke-width="1.6"/></svg>
<div style="position:absolute;left:151.50px;top:461.00px;width:1.00px;height:13.00px;background:#cfcfcf"></div>
<div class="t" style="left:159.00px;top:462.41px;font-size:10.5px;line-height:10.5px;color:#4a4a4a;letter-spacing:0.202px;font-family:"Liberation Sans", sans-serif;">top</div>
<svg style="position:absolute;left:262px;top:463px;" width="11" height="8" viewBox="0 0 11 8"><path d="M1 1 H9.5 L5.25 7 Z" fill="#555"/></svg>
<div style="position:absolute;left:279.20px;top:461.00px;width:1.00px;height:13.00px;background:#cfcfcf"></div>
<svg style="position:absolute;left:287px;top:461px;" width="16" height="12" viewBox="0 0 16 12"><path d="M1 6 Q8 -1.5 15 6 Q8 13.5 1 6 Z" fill="#6e6e6e"/><circle cx="8" cy="6" r="2.6" fill="#f3f3f3"/><circle cx="8" cy="6" r="1.5" fill="#6e6e6e"/></svg>
<div style="position:absolute;left:311.60px;top:461.00px;width:1.00px;height:13.00px;background:#cfcfcf"></div>
<div style="position:absolute;left:317.70px;top:458.90px;width:216.00px;height:16.30px;background:#fff"></div>
<div class="t" style="left:322.50px;top:462.41px;font-size:10.5px;line-height:10.5px;color:#8a8a8a;letter-spacing:-0.272px;font-family:"Liberation Sans", sans-serif;">Filter</div>
<div class="t" style="left:541.40px;top:462.41px;font-size:10.5px;line-height:10.5px;color:#4a4a4a;letter-spacing:-0.138px;font-family:"Liberation Sans", sans-serif;">Default levels</div>
<svg style="position:absolute;left:605px;top:463px;" width="11" height="8" viewBox="0 0 11 8"><path d="M1 1 H9.5 L5.25 7 Z" fill="#555"/></svg>
<div style="position:absolute;left:97.00px;top:477.60px;width:927.00px;height:10.00px;background:#fffbe6"></div>
<div style="position:absolute;left:97.00px;top:487.20px;width:927.00px;height:1.00px;background:#fff2c0"></div>
<div style="position:absolute;left:97px;top:477.6px;width:927px;height:10px;overflow:hidden">
<div class="t" style="left:22.4px;top:-3.3px;font-size:10.2px;line-height:10.2px;letter-spacing:-0.41px;color:#6a5020;font-family:'Liberation Mono',monospace"><span style="display:inline-block;width:0;height:0;border-left:5px solid #6a5020;border-top:3.5px solid transparent;border-bottom:3.5px solid transparent;margin-right:2px;vertical-align:0px"></span>WARNING: RESOURCE_DIAGNOSTICS is active.</div>
<div class="t" style="left:845px;top:-3.3px;font-size:10.2px;line-height:10.2px;letter-spacing:-0.41px;color:#666;font-family:'Liberation Mono',monospace;text-decoration:underline">bookofdead_desk</div>
<div style="position:absolute;left:6.5px;top:0;width:3.5px;height:3px;background:#f5c518"></div><div style="position:absolute;left:11px;top:0;width:3.5px;height:3px;background:#f5c518"></div>
</div>
<div style="position:absolute;left:97.00px;top:502.70px;width:927.00px;height:1.00px;background:#efefef"></div>
<div style="position:absolute;left:97.00px;top:520.10px;width:927.00px;height:1.00px;background:#efefef"></div>
<div style="position:absolute;left:97.00px;top:537.50px;width:927.00px;height:1.00px;background:#efefef"></div>
<div style="position:absolute;left:97.00px;top:554.90px;width:927.00px;height:1.00px;background:#efefef"></div>
<div style="position:absolute;left:97.00px;top:571.70px;width:927.00px;height:1.00px;background:#efefef"></div>
<div class="t" style="left:121.40px;top:491.68px;font-size:10.2px;line-height:10.2px;color:#3a3a3a;letter-spacing:-0.412px;font-family:'Liberation Mono', monospace;">skipping frames</div>
<div class="t" style="left:942.00px;top:491.68px;font-size:10.2px;line-height:10.2px;color:#555;letter-spacing:-0.412px;font-family:'Liberation Mono', monospace;text-decoration:underline;text-decoration-color:#777">bookofdead_desk</div>
<div class="t" style="left:117.80px;top:509.18px;font-size:10.2px;line-height:10.2px;color:#3a3a3a;letter-spacing:-0.412px;font-family:'Liberation Mono', monospace;">framerate has been reset</div>
<div class="t" style="left:942.00px;top:509.18px;font-size:10.2px;line-height:10.2px;color:#555;letter-spacing:-0.412px;font-family:'Liberation Mono', monospace;text-decoration:underline;text-decoration-color:#777">bookofdead_desk</div>
<div class="t" style="left:117.80px;top:526.48px;font-size:10.2px;line-height:10.2px;color:#3a3a3a;letter-spacing:-0.412px;font-family:'Liberation Mono', monospace;">framerate has been reset</div>
<div class="t" style="left:942.00px;top:526.48px;font-size:10.2px;line-height:10.2px;color:#555;letter-spacing:-0.412px;font-family:'Liberation Mono', monospace;text-decoration:underline;text-decoration-color:#777">bookofdead_desk</div>
<div class="t" style="left:117.80px;top:543.88px;font-size:10.2px;line-height:10.2px;color:#3a3a3a;letter-spacing:-0.412px;font-family:'Liberation Mono', monospace;">framerate limited to 30 due to low performace</div>
<div class="t" style="left:942.00px;top:543.88px;font-size:10.2px;line-height:10.2px;color:#555;letter-spacing:-0.412px;font-family:'Liberation Mono', monospace;text-decoration:underline;text-decoration-color:#777">bookofdead_desk</div>
<div class="t" style="left:117.80px;top:561.48px;font-size:10.2px;line-height:10.2px;color:#3a3a3a;letter-spacing:-0.412px;font-family:'Liberation Mono', monospace;">skipping frames</div>
<div class="t" style="left:942.00px;top:561.48px;font-size:10.2px;line-height:10.2px;color:#555;letter-spacing:-0.412px;font-family:'Liberation Mono', monospace;text-decoration:underline;text-decoration-color:#777">bookofdead_desk</div>
<svg style="position:absolute;left:104.5px;top:488.6px;" width="14" height="14" viewBox="0 0 14 14"><circle cx="6.6" cy="6.6" r="6" fill="#7b9bd1"/><text x="6.6" y="10" font-size="9.5" text-anchor="middle" fill="#fff" font-family="Liberation Sans" font-weight="bold">9</text></svg>
<svg style="position:absolute;left:102px;top:576px;" width="10" height="11" viewBox="0 0 10 11"><path d="M2.4 2 L6.6 5.4 L2.4 8.8" fill="none" stroke="#367cf1" stroke-width="1.5"/></svg>
<div style="position:absolute;left:0;top:269.6px;width:96px;height:97.6px;overflow:hidden;background:#6e4a20">
<div style="position:absolute;left:-2px;top:-2px;width:100px;height:102px">
<div style="position:absolute;left:2px;top:2px;width:96px;height:14px;background:linear-gradient(90deg,#6a3e18 0%,#7e5222 40%,#8a5e2a 60%,#a87838 80%,#8a5a28 100%)"></div>
<div style="position:absolute;left:64px;top:2px;width:8px;height:14px;background:linear-gradient(90deg,#7a5020,#c89a50,#7a5020);transform:skewX(-40deg)"></div>
<div style="position:absolute;left:76px;top:2px;width:8px;height:14px;background:linear-gradient(90deg,#7a5020,#b88a48,#7a5020);transform:skewX(-40deg)"></div>
<div style="position:absolute;left:12px;top:6.5px;width:3px;height:4.2px;background:#d04848"></div>
<div style="position:absolute;left:15.5px;top:6.5px;width:3px;height:4.2px;background:#e05a50"></div>
<div style="position:absolute;left:19px;top:6.5px;width:3px;height:4.2px;background:#d04848"></div>
<div style="position:absolute;left:22.5px;top:6.5px;width:3px;height:4.2px;background:#c84040"></div>
<div style="position:absolute;left:31px;top:6.5px;width:3px;height:4.2px;background:#d04848"></div>
<div style="position:absolute;left:34.5px;top:6.5px;width:3px;height:4.2px;background:#d85050"></div>
<div style="position:absolute;left:38px;top:6.5px;width:3px;height:4.2px;background:#c84040"></div>
<div style="position:absolute;left:42px;top:6.5px;width:3px;height:4.2px;background:#d04848"></div>
<div style="position:absolute;left:45.5px;top:6.5px;width:3px;height:4.2px;background:#e05a50"></div>
<div style="position:absolute;left:49px;top:6.5px;width:3px;height:4.2px;background:#d04848"></div>
<div style="position:absolute;left:26px;top:6px;width:5px;height:5px;background:#e0d0c0;border-radius:50%"></div>
<div style="position:absolute;left:12px;top:10.2px;width:40px;height:0.8px;background:#c0a040"></div>
<div style="position:absolute;left:24px;top:3.2px;width:12px;height:2.5px;background:#a08030;opacity:.8"></div>
<div style="position:absolute;left:2px;top:70px;width:96px;height:30px;background:linear-gradient(180deg,#9a6a30 0%,#946a30 25%,#7a5628 50%,#5a4020 75%,#3a2a16 100%)"></div>
<div style="position:absolute;left:2px;top:72px;width:84px;height:12px;background-image:radial-gradient(circle,rgba(220,170,80,.22) 0.7px,rgba(0,0,0,0) 1.3px),radial-gradient(circle,rgba(40,25,10,.18) 0.7px,rgba(0,0,0,0) 1.3px);background-size:3px 2.5px,4px 3.5px;background-position:0 0,1.5px 1px"></div>
<div style="position:absolute;left:83px;top:2px;width:15px;height:98px;background:linear-gradient(90deg,#7a5022 0%,#c89650 25%,#eccb7a 50%,#d8ac5a 75%,#a07030 100%)"></div>
<div style="position:absolute;left:90px;top:79px;width:7px;height:20px;background:linear-gradient(90deg,rgba(60,40,20,.0),rgba(60,40,20,.35),rgba(60,40,20,0))"></div>
<div style="position:absolute;left:2px;top:14.7px;width:28px;height:55px;background:linear-gradient(90deg,#e0cfa4 0%,#ece0bc 50%,#dcc89a 85%,#b89a68 100%)"></div>
<div style="position:absolute;left:29px;top:16px;width:7px;height:55px;background:linear-gradient(90deg,#b09a70,#e8d8b0 50%,#b09a70)"></div>
<div style="position:absolute;left:35px;top:14.7px;width:45px;height:55px;background:linear-gradient(90deg,#d8c498 0%,#efe4c4 20%,#f2e9cc 60%,#e4d2a6 100%)"></div>
<div style="position:absolute;left:79px;top:16px;width:5px;height:54px;background:linear-gradient(90deg,#d89848,#e8a860,#b87030)"></div>
<div style="position:absolute;left:2px;top:68.5px;width:84px;height:3.5px;background:linear-gradient(180deg,#e0a050,#b87830)"></div>
<div style="position:absolute;left:2px;top:22.6px;width:25px;height:3.4px;background:#4a3a2c;opacity:.8"></div>
<div style="position:absolute;left:2px;top:31.7px;width:12px;height:11.5px;background:#c42a1c"></div>
<div style="position:absolute;left:15px;top:31.7px;width:12.5px;height:11.5px;background:#c42a1c"></div>
<div style="position:absolute;left:3.5px;top:33px;width:9px;height:9px;background:radial-gradient(circle at 50% 50%,#f0d070 0%,#d8a040 45%,#b86a28 80%,#c84a20 100%)"></div>
<div style="position:absolute;left:16.5px;top:33px;width:9.5px;height:9px;background:radial-gradient(circle at 50% 50%,#f0d070 0%,#d8a040 45%,#b86a28 80%,#c84a20 100%)"></div>
<div style="position:absolute;left:2px;top:50px;width:19px;height:1px;background:#b0a088"></div>
<div style="position:absolute;left:2px;top:53.5px;width:17px;height:1px;background:#b0a088"></div>
<div style="position:absolute;left:2px;top:57px;width:20px;height:1px;background:#b0a088"></div>
<div style="position:absolute;left:2px;top:60.5px;width:12px;height:1px;background:#b0a088"></div>
<div style="position:absolute;left:39px;top:25.3px;width:35px;height:19.5px;background:#2e2a40"></div>
<div style="position:absolute;left:46.7px;top:25.7px;width:4.6px;height:5.6px;background:#4a6aa8"></div>
<div style="position:absolute;left:51.7px;top:25.7px;width:4.6px;height:5.6px;background:#3a5a8a"></div>
<div style="position:absolute;left:56.7px;top:25.7px;width:4.6px;height:5.6px;background:#4a3a28"></div>
<div style="position:absolute;left:61.7px;top:25.7px;width:4.6px;height:5.6px;background:#3a6a40"></div>
<div style="position:absolute;left:67.7px;top:25.7px;width:4.6px;height:5.6px;background:#4a70a8"></div>
<div style="position:absolute;left:46.7px;top:32.2px;width:4.6px;height:5.6px;background:#6a3028"></div>
<div style="position:absolute;left:51.7px;top:32.2px;width:4.6px;height:5.6px;background:#3a6a38"></div>
<div style="position:absolute;left:56.7px;top:32.2px;width:4.6px;height:5.6px;background:#7a3a90"></div>
<div style="position:absolute;left:61.7px;top:32.2px;width:4.6px;height:5.6px;background:#4a3a30"></div>
<div style="position:absolute;left:67.7px;top:32.2px;width:4.6px;height:5.6px;background:#4a60a0"></div>
<div style="position:absolute;left:39.7px;top:38.7px;width:4.6px;height:5.6px;background:#3a5aa0"></div>
<div style="position:absolute;left:45.2px;top:38.7px;width:4.6px;height:5.6px;background:#3a5a9a"></div>
<div style="position:absolute;left:50.7px;top:38.7px;width:4.6px;height:5.6px;background:#3a5a9a"></div>
<div style="position:absolute;left:56.7px;top:38.7px;width:4.6px;height:5.6px;background:#3a5a9a"></div>
<div style="position:absolute;left:62.2px;top:38.7px;width:4.6px;height:5.6px;background:#3a5a9a"></div>
<div style="position:absolute;left:67.7px;top:38.7px;width:4.6px;height:5.6px;background:#2a6a7a"></div>
<div style="position:absolute;left:40.6px;top:40px;width:2.8px;height:3px;background:#b88060"></div>
<div style="position:absolute;left:46.1px;top:40px;width:2.8px;height:3px;background:#b88060"></div>
<div style="position:absolute;left:51.6px;top:40px;width:2.8px;height:3px;background:#b88060"></div>
<div style="position:absolute;left:57.6px;top:40px;width:2.8px;height:3px;background:#b88060"></div>
<div style="position:absolute;left:63.1px;top:40px;width:2.8px;height:3px;background:#b88060"></div>
<div style="position:absolute;left:36px;top:21px;width:13px;height:19px;background:radial-gradient(ellipse,rgba(255,252,235,1) 0%,rgba(255,246,210,.85) 35%,rgba(255,240,190,0) 72%)"></div>
<div style="position:absolute;left:49px;top:49.5px;width:16px;height:1px;background:#b0a088"></div>
<div style="position:absolute;left:42px;top:53px;width:32px;height:1px;background:#b0a088"></div>
<div style="position:absolute;left:41px;top:57px;width:33px;height:1px;background:#b0a088"></div>
<div style="position:absolute;left:46px;top:60.5px;width:24px;height:1px;background:#b0a088"></div>
<div style="position:absolute;left:51px;top:63.5px;width:12px;height:1px;background:#b0a088"></div>
<div style="position:absolute;left:21px;top:79px;width:22px;height:6px;background:#2a5ad0;border-bottom:1px solid #c8a050;box-sizing:border-box"></div>
<div style="position:absolute;left:25px;top:81.2px;width:14px;height:1.3px;background:#c8d4f0"></div>
<div style="position:absolute;left:52px;top:79.8px;width:24px;height:3.4px;background:#d4c488"></div>
<div style="position:absolute;left:52px;top:79.8px;width:2.5px;height:3.4px;background:#5a4a30"></div>
<div style="position:absolute;left:75px;top:72.5px;width:2.5px;height:12px;background:#5a4a3a"></div>
<div style="position:absolute;left:78px;top:73px;width:2.5px;height:11.5px;background:#4a3a2c"></div>
</div></div>
<svg style="position:absolute;left:0;top:574px" width="62" height="22" viewBox="0 0 62 22"><text x="5.2" y="5.2" font-size="2.4" fill="#3a3a3a" font-family="Liberation Sans" font-weight="bold" letter-spacing="1.05">POWERED BY</text><rect x="2" y="6.4" width="33" height="8.4" rx="4" fill="#3b3b3b"/><text x="4.2" y="13.6" font-size="7.4" fill="#0a0a0a" font-family="Liberation Sans" font-weight="bold" font-style="italic" letter-spacing="-0.25">PLAY&#8217;n</text><rect x="52" y="6.6" width="6" height="9" rx="1.2" fill="#343434"/><g transform="translate(43.5 10.5) skewX(-16) translate(-43.5 -10.5)"><rect x="32.3" y="3.3" width="22" height="14.5" rx="4.2" fill="#383838"/><path d="M42.6 6.3 H37 Q35.2 6.3 35.2 8.1 V12.9 Q35.2 14.7 37 14.7 H40.8 Q42.4 14.7 42.4 13.1 V10.8 H39.6" fill="none" stroke="#000" stroke-width="2.6"/><rect x="45.4" y="6.3" width="6.6" height="8.4" rx="1.8" fill="none" stroke="#000" stroke-width="2.6"/></g></svg>
<svg style="position:absolute;left:62px;top:32px;" width="34" height="34" viewBox="0 0 34 34"><circle cx="17" cy="17" r="14.6" fill="#2c395d" stroke="#80889c" stroke-width="1.5"/><path d="M10.4 10.4 L23.6 23.6 M23.6 10.4 L10.4 23.6" stroke="#b4b4b4" stroke-width="2.1"/></svg>
<svg style="position:absolute;left:0;top:0" width="1024" height="605" viewBox="0 0 1024 605"><path d="M40.10 3.00 C41.32 3.05 45.63 2.81 47.40 3.30 C49.17 3.79 49.27 3.63 50.70 5.95 C52.13 8.27 55.00 14.11 56.00 17.20 C57.00 20.29 56.92 21.85 56.70 24.50 C56.48 27.15 55.92 31.02 54.70 33.10 C53.48 35.18 51.38 36.57 49.40 37.00 C47.42 37.43 45.12 36.58 42.80 35.70 C40.48 34.82 38.27 33.47 35.50 31.70 C32.73 29.93 28.07 27.30 26.20 25.10 C24.33 22.90 24.52 20.48 24.30 18.50 C24.08 16.52 23.92 15.29 24.90 13.20 C25.88 11.11 28.55 7.65 30.20 5.95 C31.85 4.25 33.15 3.49 34.80 3.00 C36.45 2.51 39.22 3.00 40.10 3.00" fill="none" stroke="#e63e5e" stroke-width="1.15" stroke-linejoin="round" stroke-linecap="round"/><path d="M339.50 34.30 C338.85 34.62 336.52 35.02 335.60 36.25 C334.68 37.48 334.38 38.58 334.00 41.70 C333.62 44.83 332.38 52.52 333.30 55.00 C334.22 57.48 336.51 55.82 339.50 56.60 C342.49 57.38 347.33 58.67 351.25 59.70 C355.17 60.73 359.09 62.15 363.00 62.80 C366.91 63.45 371.20 64.25 374.70 63.60 C378.20 62.95 381.13 60.72 384.00 58.90 C386.87 57.08 390.58 55.18 391.90 52.70 C393.22 50.22 394.77 46.74 391.90 44.00 C389.03 41.26 378.62 38.00 374.70 36.25 C370.78 34.50 371.68 33.96 368.40 33.50 C365.12 33.04 357.86 33.17 355.00 33.50 C352.14 33.83 353.83 35.04 351.25 35.50 C348.67 35.96 341.79 36.33 339.50 36.25 C337.21 36.17 337.83 35.21 337.50 35.00" fill="none" stroke="#e63e5e" stroke-width="1.15" stroke-linejoin="round" stroke-linecap="round"/><path d="M353.50 76.30 C351.90 76.47 346.11 76.64 343.90 77.30 C341.69 77.96 340.86 77.62 340.25 80.25 C339.64 82.88 339.76 90.17 340.25 93.10 C340.74 96.02 341.82 95.58 343.20 97.80 C344.57 100.02 345.73 104.87 348.50 106.40 C351.27 107.93 356.60 107.45 359.80 107.00 C363.00 106.55 366.38 106.23 367.70 103.70 C369.02 101.17 368.25 94.33 367.70 91.80 C367.15 89.27 365.07 90.15 364.40 88.50 C363.73 86.85 365.02 83.77 363.70 81.90 C362.38 80.03 358.20 78.23 356.50 77.30 C354.80 76.37 354.00 76.47 353.50 76.30" fill="none" stroke="#e63e5e" stroke-width="1.15" stroke-linejoin="round" stroke-linecap="round"/><path d="M113.40 388.60 C111.45 388.75 104.30 388.53 101.70 389.50 C99.10 390.47 97.80 392.44 97.80 394.40 C97.80 396.36 99.42 399.30 101.70 401.25 C103.98 403.20 103.68 404.79 111.50 406.10 C119.32 407.41 135.90 408.45 148.60 409.10 C161.30 409.75 172.08 410.00 187.70 410.00 C203.32 410.00 231.88 410.56 242.30 409.10 C252.72 407.64 249.54 403.53 250.20 401.25 C250.86 398.97 250.17 397.19 246.25 395.40 C242.33 393.61 238.09 391.48 226.70 390.50 C215.31 389.52 192.55 389.50 177.90 389.50 C163.25 389.50 149.55 390.65 138.80 390.50 C128.05 390.35 117.63 388.92 113.40 388.60" fill="none" stroke="#e63e5e" stroke-width="1.15" stroke-linejoin="round" stroke-linecap="round"/><path d="M108.50 391.50 C108.88 392.58 110.30 395.75 110.80 398.00 C111.30 400.25 111.38 403.83 111.50 405.00" fill="none" stroke="#e63e5e" stroke-width="1.15" stroke-linejoin="round" stroke-linecap="round"/><path d="M264.90 373.40 C264.80 374.98 264.95 380.55 264.30 382.90 C263.65 385.25 262.25 385.85 261.00 387.50 C259.75 389.15 257.50 391.92 256.80 392.80" fill="none" stroke="#e63e5e" stroke-width="1.3" stroke-linejoin="round" stroke-linecap="round"/><path d="M251.60 388.40 C252.08 388.75 253.63 389.67 254.50 390.50 C255.37 391.33 255.55 392.98 256.80 393.40 C258.05 393.82 260.72 392.80 262.00 393.00 C263.28 393.20 263.53 394.25 264.50 394.60 C265.47 394.95 267.25 395.02 267.80 395.10" fill="none" stroke="#e63e5e" stroke-width="1.3" stroke-linejoin="round" stroke-linecap="round"/><path d="M142.00 433.60 C139.92 433.60 132.62 433.08 129.50 433.60 C126.38 434.12 124.53 434.88 123.30 436.70 C122.07 438.52 122.10 442.15 122.10 444.50 C122.10 446.85 122.07 448.58 123.30 450.80 C124.53 453.02 126.77 455.98 129.50 457.80 C132.23 459.62 134.48 461.17 139.70 461.70 C144.92 462.23 154.95 462.03 160.80 461.00 C166.65 459.97 172.07 457.85 174.80 455.50 C177.53 453.15 177.20 448.98 177.20 446.90 C177.20 444.82 176.88 444.57 174.80 443.00 C172.72 441.43 168.73 438.93 164.70 437.50 C160.67 436.07 154.38 435.05 150.60 434.40 C146.82 433.75 143.43 433.73 142.00 433.60" fill="none" stroke="#e63e5e" stroke-width="1.15" stroke-linejoin="round" stroke-linecap="round"/></svg>
</body></html>
